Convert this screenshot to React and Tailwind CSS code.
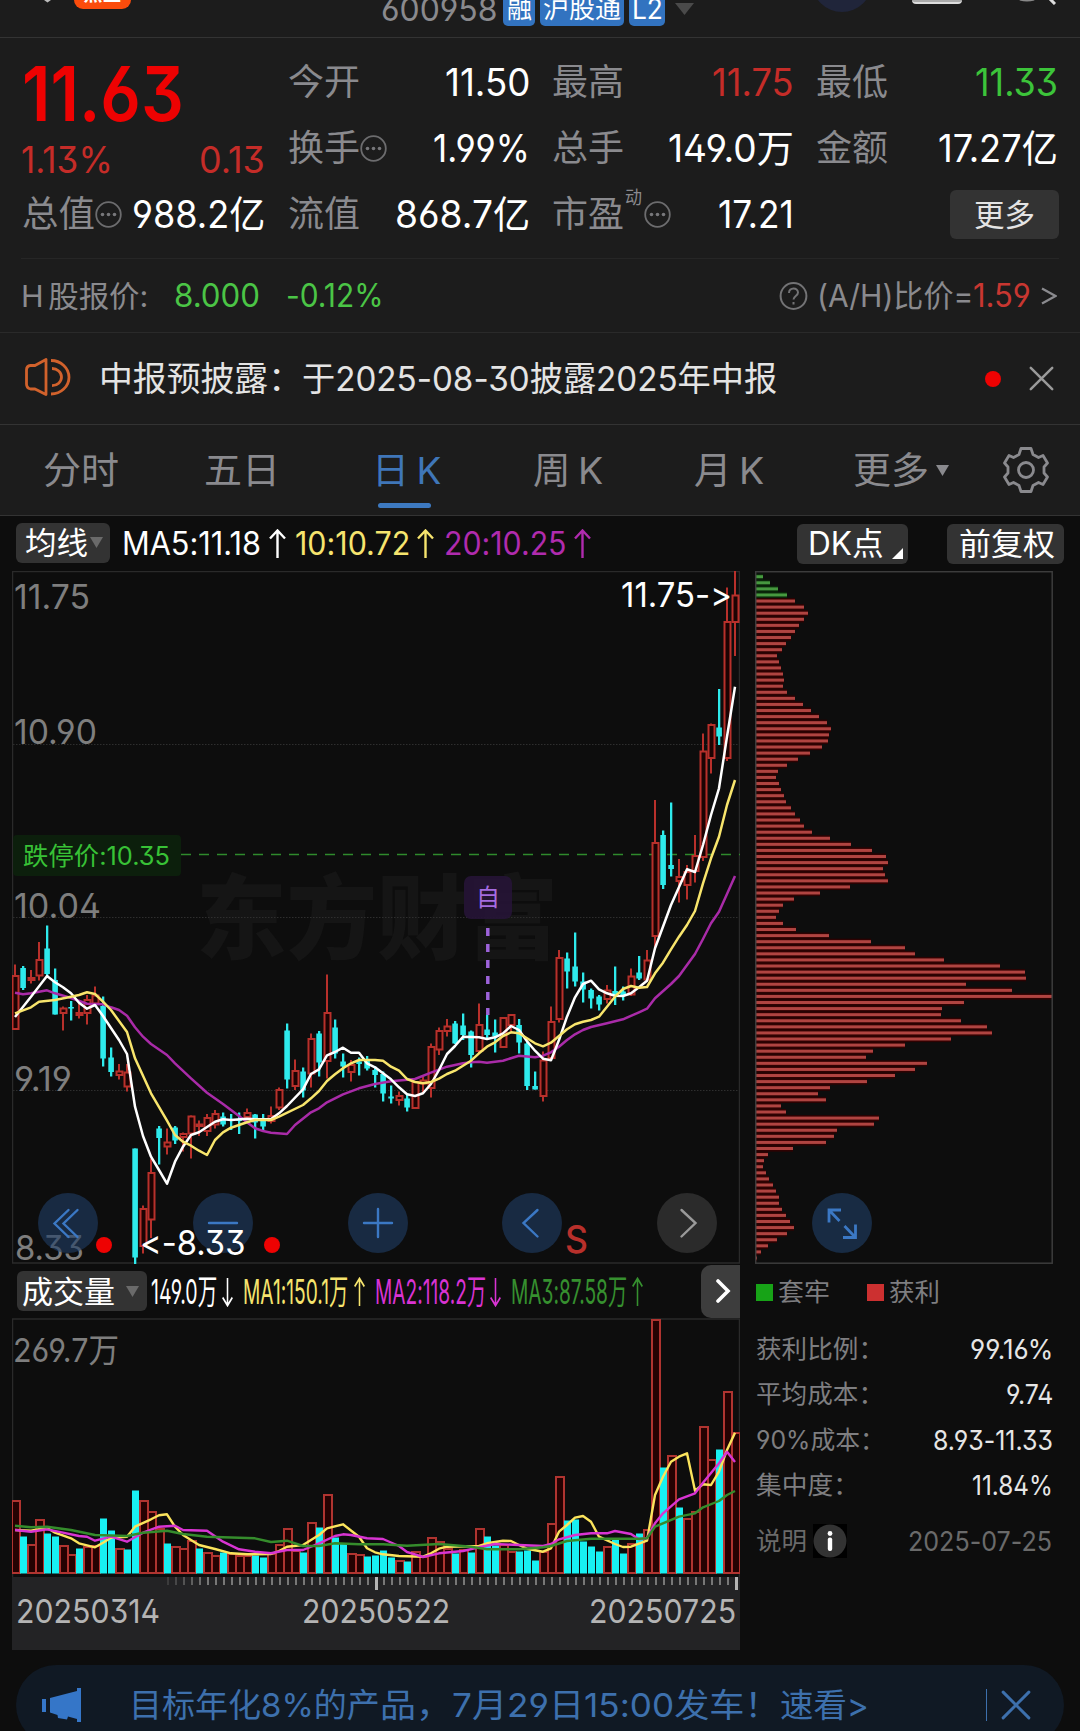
import { useLayoutEffect, useRef } from "react";

// [direction, high, body top, body bottom, low]
const candles = [
  ["u", 964.5, 975.5, 1029.5, 1029.5], ["d", 966, 968, 988, 990], ["u", 970, 977.5, 980.5, 983.5],
  ["u", 942, 959.5, 976, 980.5], ["d", 925.5, 948.5, 974, 976.5], ["d", 968.5, 980, 1014.5, 1014.5],
  ["u", 1006.5, 1008, 1013.5, 1030.5], ["d", 1001, 1007, 1008.5, 1020.5], ["u", 1003.5, 1012.5, 1015.5, 1018.5],
  ["u", 995, 999.5, 1013.5, 1024.5], ["u", 986.5, 995, 1004, 1005], ["d", 996.5, 1006, 1058.5, 1066.5],
  ["d", 1047.5, 1057.5, 1072, 1076.5], ["u", 1064, 1071, 1075.5, 1079.5], ["u", 1064, 1072, 1087, 1091.5],
  ["d", 1148.5, 1148.5, 1257.5, 1264], ["u", 1205.5, 1208.5, 1246.5, 1253.5], ["u", 1158.5, 1172.5, 1220, 1238],
  ["d", 1126, 1128.5, 1138, 1164.5], ["u", 1128.5, 1142, 1147, 1154.5], ["d", 1126, 1127.5, 1140.5, 1144],
  ["u", 1132.5, 1133.5, 1137.5, 1151.5], ["u", 1115.5, 1116, 1134, 1158.5], ["u", 1120.5, 1124, 1126.5, 1136],
  ["u", 1114, 1117.5, 1131.5, 1136], ["u", 1110, 1113.5, 1125, 1128.5], ["d", 1112.5, 1116.5, 1124.5, 1126.5],
  ["d", 1114, 1119.5, 1120.5, 1130], ["d", 1112.5, 1119.5, 1120.5, 1134], ["u", 1108.5, 1112.5, 1117.5, 1120.5],
  ["d", 1114, 1114.5, 1122.5, 1138.5], ["d", 1114, 1120.5, 1126.5, 1131.5], ["u", 1106.5, 1115.5, 1121.5, 1123.5],
  ["u", 1087.5, 1089.5, 1108, 1110], ["d", 1023.5, 1030.5, 1079.5, 1088.5], ["u", 1059.5, 1070.5, 1086.5, 1090],
  ["d", 1067.5, 1071.5, 1090.5, 1097.5], ["u", 1033.5, 1038.5, 1074, 1087.5], ["d", 1031, 1033.5, 1062.5, 1076.5],
  ["u", 974.5, 1012.5, 1061.5, 1078.5], ["d", 1019.5, 1027.5, 1053.5, 1058.5], ["d", 1053.5, 1061.5, 1066.5, 1077.5],
  ["u", 1060, 1064.5, 1072.5, 1081.5], ["d", 1057.5, 1061.5, 1064, 1075.5], ["d", 1056, 1060, 1068.5, 1070.5],
  ["d", 1066.5, 1070, 1075, 1087.5], ["d", 1071.5, 1074, 1093.5, 1101.5], ["d", 1085.5, 1096.5, 1098.5, 1103.5],
  ["u", 1091.5, 1095.5, 1100.5, 1105.5], ["d", 1093.5, 1098.5, 1107.5, 1111.5], ["u", 1081, 1081.5, 1108.5, 1108.5],
  ["u", 1076.5, 1080, 1084, 1093.5], ["u", 1043.5, 1046.5, 1088.5, 1097.5], ["u", 1027.5, 1030.5, 1050, 1055],
  ["u", 1019, 1026, 1031.5, 1036.5], ["d", 1021, 1023.5, 1043.5, 1044], ["d", 1013.5, 1025.5, 1035, 1040],
  ["d", 1030.5, 1031.5, 1055, 1067.5], ["u", 1003.5, 1024.5, 1051.5, 1053.5], ["d", 1015, 1029.5, 1035, 1038.5],
  ["d", 1019.5, 1032.5, 1036.5, 1052.5], ["u", 1017.5, 1017.5, 1047.5, 1047.5], ["u", 1014, 1014.5, 1025.5, 1031.5],
  ["d", 1019, 1025, 1042.5, 1053.5], ["d", 1041.5, 1043.5, 1086, 1090], ["d", 1071.5, 1086, 1089.5, 1089.5],
  ["u", 1051.5, 1060, 1096.5, 1101.5], ["u", 1006.5, 1021.5, 1058.5, 1060], ["u", 950, 957.5, 1019.5, 1022.5],
  ["d", 952.5, 958.5, 971.5, 988.5], ["d", 932.5, 966.5, 981.5, 986.5], ["d", 972.5, 981.5, 989.5, 1002.5],
  ["d", 988.5, 990, 998.5, 1008.5], ["d", 995, 996.5, 1004.5, 1010.5], ["u", 985, 990, 999.5, 1003.5],
  ["d", 966.5, 991, 995, 1005], ["d", 986.5, 991.5, 995, 1000.5], ["u", 968.5, 976, 995, 996],
  ["d", 956, 972.5, 978.5, 980], ["u", 950, 960, 980, 981.5], ["u", 800, 842.5, 936.5, 948.5],
  ["d", 830.5, 835, 885, 889], ["d", 802.5, 865, 869, 876.5], ["u", 859, 876.5, 881.5, 902.5],
  ["u", 865, 871.5, 885.5, 899.5], ["u", 835, 855.5, 871.5, 882.5], ["u", 733.5, 751, 857.5, 861],
  ["u", 723.5, 724.5, 758.5, 773.5], ["d", 689, 727.5, 736.5, 745], ["u", 587.5, 621.5, 758.5, 761],
  ["u", 571, 595, 622.5, 656],
];

// moving averages as [day, level], level in thirds of a pixel
const ma5 = [[0, 411], [2, 350], [4, 288], [5, 307], [6, 322], [7, 340], [8, 368], [9, 386], [10, 375], [11, 408], [13, 480], [14, 522], [15, 680], [16, 768], [17, 830], [18, 870], [19, 911], [20, 845], [21, 800], [22, 765], [23, 757], [25, 725], [26, 718], [27, 720], [29, 716], [30, 718], [32, 717], [33, 700], [34, 678], [36, 628], [37, 582], [38, 568], [39, 526], [40, 516], [41, 503], [42, 518], [43, 518], [44, 550], [45, 562], [46, 580], [47, 598], [48, 622], [49, 643], [50, 648], [51, 640], [52, 612], [53, 570], [54, 522], [55, 498], [56, 470], [58, 472], [59, 477], [60, 472], [61, 460], [62, 438], [63, 450], [64, 484], [65, 512], [66, 536], [67, 541], [68, 480], [69, 410], [70, 352], [71, 312], [72, 302], [73, 328], [74, 340], [75, 347], [76, 348], [77, 340], [78, 322], [79, 302], [80, 205], [82, 75], [84, -32], [85, -24], [86, -105], [87, -195], [88, -275], [89, -430], [90, -580]];
const ma10 = [[0, 400], [2, 382], [3, 365], [5, 360], [7, 350], [8, 345], [9, 337], [10, 342], [11, 365], [12, 390], [14, 456], [15, 535], [17, 640], [19, 722], [20, 765], [21, 785], [22, 797], [23, 812], [24, 825], [25, 780], [26, 757], [27, 743], [29, 727], [30, 720], [32, 720], [33, 710], [36, 675], [37, 655], [38, 633], [39, 603], [40, 583], [41, 565], [42, 550], [43, 540], [45, 540], [46, 542], [47, 560], [48, 572], [49, 597], [50, 606], [51, 610], [52, 606], [53, 596], [54, 582], [55, 572], [57, 542], [58, 520], [59, 500], [60, 487], [61, 468], [62, 457], [63, 460], [64, 475], [65, 490], [66, 499], [67, 488], [68, 468], [69, 448], [70, 433], [71, 425], [72, 420], [73, 410], [74, 380], [75, 350], [76, 327], [77, 318], [78, 323], [79, 321], [80, 280], [81, 248], [82, 208], [83, 170], [84, 135], [85, 93], [86, 10], [87, -65], [88, -130], [89, -225], [90, -300]];
const ma20 = [[0, 338], [1, 343], [2, 340], [4, 331], [5, 340], [7, 354], [9, 371], [11, 373], [12, 382], [13, 390], [14, 407], [15, 442], [16, 470], [17, 492], [19, 525], [20, 550], [22, 595], [24, 638], [26, 672], [28, 708], [29, 727], [30, 745], [31, 753], [32, 758], [34, 762], [35, 735], [37, 697], [38, 685], [39, 667], [41, 643], [43, 625], [45, 612], [47, 604], [50, 597], [52, 578], [54, 560], [56, 550], [57, 547], [58, 545], [59, 548], [61, 542], [63, 527], [65, 532], [66, 527], [67, 517], [68, 500], [69, 480], [70, 463], [71, 450], [72, 441], [74, 430], [76, 418], [78, 397], [79, 386], [80, 355], [82, 312], [83, 288], [84, 255], [85, 222], [86, 177], [87, 130], [88, 95], [89, 42], [90, -12]];

const volumes = [73, 37, 29, 54, 40, 37, 28, 19, 25, 27, 28, 55, 43, 25, 24, 83, 73, 62, 45, 30, 27, 25, 33, 25, 21, 18, 21, 20, 18, 18, 18, 16, 20, 29, 45, 23, 21, 51, 46, 79, 36, 30, 20, 19, 17, 18, 23, 16, 13, 12, 22, 17, 36, 32, 25, 20, 24, 21, 45, 37, 28, 29, 22, 22, 23, 13, 22, 50, 97, 53, 54, 32, 27, 22, 27, 34, 20, 30, 40, 44, 254, 106, 118, 66, 55, 62, 147, 114, 124, 182, 141];
const fallingDays = new Set([1, 4, 5, 8, 11, 12, 14, 15, 19, 23, 26, 30, 31, 36, 38, 40, 41, 44, 45, 46, 47, 49, 55, 57, 59, 60, 63, 64, 65, 69, 70, 71, 72, 73, 75, 76, 78, 81, 83, 88]);

const vol5 = [[0, 810], [2, 812], [4, 803], [5, 818], [7, 835], [8, 850], [10, 862], [11, 848], [12, 833], [14, 830], [15, 800], [17, 778], [18, 766], [19, 763], [20, 800], [21, 825], [23, 855], [25, 867], [27, 880], [29, 883], [32, 882], [33, 873], [34, 860], [36, 855], [38, 825], [39, 805], [41, 793], [43, 830], [44, 865], [45, 877], [46, 883], [48, 888], [51, 890], [52, 880], [53, 866], [54, 860], [58, 858], [59, 850], [61, 842], [62, 843], [63, 855], [64, 866], [66, 875], [67, 865], [68, 815], [69, 795], [70, 773], [71, 768], [72, 785], [73, 830], [75, 852], [76, 861], [77, 860], [79, 842], [80, 705], [81, 650], [82, 605], [83, 590], [84, 580], [85, 692], [86, 673], [87, 675], [88, 635], [89, 570], [90, 518]];
const vol10 = [[0, 810], [2, 815], [4, 808], [6, 818], [8, 828], [9, 830], [10, 842], [12, 830], [14, 845], [16, 818], [18, 800], [20, 797], [21, 810], [24, 812], [26, 845], [28, 868], [30, 875], [32, 880], [34, 870], [36, 870], [38, 850], [40, 828], [41, 823], [42, 825], [44, 835], [46, 837], [48, 858], [49, 876], [50, 883], [51, 891], [53, 880], [56, 873], [58, 862], [60, 852], [63, 855], [66, 858], [67, 852], [68, 838], [70, 825], [72, 820], [74, 820], [75, 813], [77, 822], [78, 838], [79, 835], [80, 790], [81, 760], [83, 718], [85, 700], [86, 668], [88, 610], [89, 575], [90, 606]];
const vol20 = [[0, 797], [2, 802], [4, 800], [7, 810], [10, 825], [14, 828], [16, 818], [19, 812], [21, 822], [24, 830], [30, 835], [32, 846], [34, 842], [36, 858], [38, 858], [40, 850], [43, 853], [46, 853], [49, 857], [53, 852], [57, 860], [59, 868], [63, 868], [66, 862], [67, 858], [69, 843], [72, 836], [78, 836], [79, 835], [80, 800], [83, 770], [85, 760], [86, 742], [88, 723], [89, 705], [90, 693]];

const chips = [7, 14, 22, 31, 39, 48, 52, 48, 43, 39, 35, 30, 26, 21, 23, 25, 27, 28, 27, 31, 39, 47, 55, 63, 71, 75, 73, 72, 66, 54, 42, 31, 22, 20, 23, 25, 28, 30, 35, 39, 44, 48, 56, 74, 95, 116, 130, 132, 127, 129, 132, 94, 64, 38, 27, 23, 20, 27, 40, 73, 115, 149, 159, 188, 244, 269, 270, 210, 256, 296, 208, 186, 185, 205, 231, 236, 195, 149, 117, 110, 171, 159, 139, 111, 74, 62, 70, 25, 30, 123, 118, 81, 78, 70, 37, 12, 8, 7, 10, 13, 17, 20, 23, 23, 26, 30, 34, 38, 31, 21, 12, 5, 1];

const dayX = (i) => 15 + i * 8;
const toPoints = (line, base) => line.map(([i, v]) => `${dayX(i)},${(base + v / 3).toFixed(1)}`).join(" ");

// Squeezes or stretches its text to the width of the box
function Fit({ className = "", children }) {
  const box = useRef(null);
  const text = useRef(null);

  useLayoutEffect(() => {
    const ratio = box.current.clientWidth / text.current.offsetWidth;
    text.current.style.transform = `scaleX(${ratio})`;
  }, [children]);

  return (
    <span ref={box} className={`inline-block shrink-0 leading-none ${className}`}>
      <span ref={text} className="inline-block origin-left whitespace-pre">{children}</span>
    </span>
  );
}

function SvgText({ x, y, width, size, fill, weight, children }) {
  return (
    <text x={x} y={y} fontSize={size} fill={fill} fontWeight={weight} textLength={width} lengthAdjust="spacingAndGlyphs">
      {children}
    </text>
  );
}

function Dots() {
  return (
    <svg className="h-[27px] w-[27px] shrink-0" viewBox="0 0 27 27">
      <circle cx="13.5" cy="13.5" r="12.3" fill="none" stroke="#6c6c6e" strokeWidth="1.8" />
      <circle cx="7.5" cy="13.5" r="1.8" fill="#77777a" />
      <circle cx="13.5" cy="13.5" r="1.8" fill="#77777a" />
      <circle cx="19.5" cy="13.5" r="1.8" fill="#77777a" />
    </svg>
  );
}

function Arrow({ down, className = "w-[17px]" }) {
  return (
    <svg className={`h-[30px] shrink-0 ${down ? "rotate-180" : ""} ${className}`} viewBox="0 0 17 30" fill="none" stroke="currentColor" strokeWidth="2.4" preserveAspectRatio="none">
      <path d="M8.5 29V2M1 9.5 8.5 1.5 16 9.5" />
    </svg>
  );
}

function Cross({ className }) {
  return (
    <svg className={className} viewBox="0 0 28 28" fill="none" stroke="currentColor" strokeWidth="2.8" strokeLinecap="round">
      <path d="M2 2 26 26M26 2 2 26" />
    </svg>
  );
}

function Header() {
  return (
    <header className="flex h-[38px] shrink-0 items-start overflow-hidden border-b border-[#333]">
      <svg className="ml-[42px] h-[3px] w-[11px]" viewBox="0 0 11 3"><path d="M2 0h7L5.500 2.500z" fill="#bbb" /></svg>
      <div className="ml-[21px] flex h-[9px] w-[57px] items-end justify-center overflow-hidden rounded-b-[9px] bg-[#fb4c0c]">
        <span className="mb-[5px] text-[19px] leading-none font-bold text-white">点金</span>
      </div>
      <Fit className="-mt-[7px] ml-[250px] w-[117px] text-[33px] text-[#8a8a8e]">600958</Fit>
      <div className="-mt-2 ml-[5px] flex gap-[5px] text-[26px] text-white">
        <div className="flex h-[34px] w-8 items-center justify-center rounded-[5px] bg-[#3273c0]"><Fit className="w-[25px]">融</Fit></div>
        <div className="flex h-[34px] w-[84px] items-center justify-center rounded-[5px] bg-[#3273c0]"><Fit className="w-[78px]">沪股通</Fit></div>
        <div className="flex h-[34px] w-[36px] items-center justify-center rounded-[5px] bg-[#3273c0]"><Fit className="w-[31px] text-[28px]">L2</Fit></div>
      </div>
      <svg className="mt-[3px] ml-[10px] h-3 w-[19px]" viewBox="0 0 19 12"><path d="M0 0h19L9.500 12z" fill="#4a4a4a" /></svg>
      <svg className="ml-[122px] h-3 w-[52px]" viewBox="0 0 52 12"><circle cx="26" cy="-18" r="30" fill="#20253a" /></svg>
      <div className="ml-[44px] h-1 w-[50px] rounded-b-[4px] border-b-2 border-[#ddd] bg-[#aaa]" />
      <svg className="ml-[57px] h-[5px] w-[38px]" viewBox="0 0 38 5" fill="none" strokeWidth="3"><path d="M1-1Q8 1 15-1" stroke="#888" /><path d="M30-2 36 4" stroke="#ddd" /></svg>
    </header>
  );
}

const stats = [
  [
    { label: "今开", value: <Fit className="w-[85px]">11.50</Fit> },
    { label: "换手", icon: true, value: <Fit className="w-[97px]">1.99%</Fit> },
    { label: "流值", value: <Fit className="w-[135px]">868.7亿</Fit> },
  ],
  [
    { label: "最高", value: <Fit className="w-[82px] text-[#c52c28]">11.75</Fit> },
    { label: "总手", value: <Fit className="w-[126px]">149.0万</Fit> },
    { label: "市盈", mark: "动", icon: true, value: <Fit className="w-[76px]">17.21</Fit> },
  ],
  [
    { label: "最低", value: <Fit className="w-[83px] text-[#3cc43a]">11.33</Fit> },
    { label: "金额", value: <Fit className="w-[120px]">17.27亿</Fit> },
  ],
];

function Quote() {
  return (
    <section className="h-[220px] shrink-0 px-6 pt-[11px]">
      <div className="grid grid-cols-[240px_240px_240px_240px] gap-x-6 text-[38px]">
        <div className="-ml-0.5">
          <div className="flex h-[87px] items-center">
            <Fit className="w-[162px] text-[76px] font-semibold text-[#ee0202]">11.63</Fit>
          </div>
          <div className="flex h-[47px] items-center justify-between text-[37px] text-[#c52c28]">
            <Fit className="-ml-px w-[92px]">1.13%</Fit>
            <Fit className="-mr-px w-[66px]">0.13</Fit>
          </div>
          <div className="flex h-[62px] items-center">
            <Fit className="w-[73px] text-[36px] text-[#8a8a8e]">总值</Fit>
            <Dots />
            <Fit className="-mr-px ml-auto w-[133px] text-white">988.2亿</Fit>
          </div>
        </div>
        {stats.map((column, index) => (
          <div key={index}>
            {column.map((item) => (
              <div className="flex h-[66px] items-center" key={item.label}>
                <Fit className="w-[72px] text-[36px] text-[#8a8a8e]">{item.label}</Fit>
                {item.mark && <Fit className="mt-[-32px] mr-[2px] ml-px w-[17px] text-[18px] text-[#8a8a8e]">{item.mark}</Fit>}
                {item.icon && <Dots />}
                <div className="-mr-0.5 ml-auto flex text-white">{item.value}</div>
              </div>
            ))}
            {column.length === 2 && (
              <div className="flex h-[66px] items-center justify-end">
                <button className="-mr-[3px] flex h-[49px] w-[109px] items-center justify-center rounded-[6px] bg-[#333]">
                  <Fit className="w-[61px] text-[31px] text-[#e4e4e4]">更多</Fit>
                </button>
              </div>
            )}
          </div>
        ))}
      </div>
    </section>
  );
}

function HShare() {
  return (
    <section className="shrink-0 border-b border-[#2a2a2a]">
      <div className="mx-[21px] flex h-[74px] items-center border-t border-[#262626] text-[32px] text-[#8a8a8e]">
        <Fit className="w-[127px] text-[30px] [word-spacing:-4px]">H 股报价:</Fit>
        <Fit className="ml-[26px] w-[86px] text-[#4bc546]">8.000</Fit>
        <Fit className="ml-[26px] w-[98px] text-[#4bc546]">-0.12%</Fit>
        <svg className="ml-auto h-7 w-[29px]" viewBox="0 0 29 28" fill="none" stroke="#737375" strokeWidth="2">
          <circle cx="14.500" cy="14" r="12.900" />
          <path d="M10 11c0-6 9-6 9-.5 0 3.500-4.500 3.500-4.500 7M14.500 20v2.500" />
        </svg>
        <Fit className="ml-[9px] w-[156px] text-[31px]">(A/H)比价=</Fit>
        <Fit className="w-[58px] text-[#c83731]">1.59</Fit>
        <svg className="mr-0.5 ml-[10px] h-[18px] w-4" viewBox="0 0 16 18" fill="none" stroke="currentColor" strokeWidth="2.300"><path d="M1 1.500 14.500 9 1 16.500" /></svg>
      </div>
    </section>
  );
}

function Notice() {
  return (
    <section className="flex h-[92px] shrink-0 items-center border-b border-[#333] pl-[25px] text-[34px] text-[#e4e4e4]">
      <svg className="-mt-[3px] h-[38px] w-[46px]" viewBox="0 0 46 38" fill="none" stroke="#d2622c" strokeWidth="2.800" strokeLinejoin="round">
        <path d="M10 7.500 21 1.500V36.500L10 31H5.500Q1.500 30 1.500 26V12Q1.500 8 5.500 7.500Z" />
        <path d="M26 2.500A18 16.750 0 0 1 26 36" />
        <path d="M27 10.500A9.500 8.600 0 0 1 27 27.700" />
      </svg>
      <Fit className="ml-[28px] w-[203px]">中报预披露：</Fit>
      <Fit className="w-[475px]">于2025-08-30披露2025年中报</Fit>
      <span className="ml-[208px] size-4 rounded-full bg-[#ee0202]" />
      <Cross className="ml-[28px] size-[25px] text-[#9a9a9a]" />
    </section>
  );
}

function Tabs() {
  return (
    <nav className="flex h-[91px] shrink-0 items-center border-b border-[#333] text-[37px] text-[#8a8a8e]">
      <div className="flex w-[161px] justify-center"><Fit className="w-[76px]">分时</Fit></div>
      <div className="flex w-[161px] justify-center"><Fit className="w-[76px]">五日</Fit></div>
      <div className="relative flex h-full w-[161px] items-center justify-center pl-2 text-[#3f76b8]">
        <Fit className="w-[69px] [word-spacing:-3px]">日 K</Fit>
        <span className="absolute bottom-[7px] left-[56px] h-[5px] w-[53px] rounded-full bg-[#3d79c0]" />
      </div>
      <div className="flex w-[161px] justify-center pl-2"><Fit className="w-[70px] [word-spacing:-3px]">周 K</Fit></div>
      <div className="flex w-[161px] justify-center pl-2"><Fit className="w-[70px] [word-spacing:-3px]">月 K</Fit></div>
      <div className="ml-[48px] flex items-center">
        <Fit className="w-[76px]">更多</Fit>
        <svg className="ml-[7px] h-[11px] w-[13px]" viewBox="0 0 13 11"><path d="M0 0h13L6.500 11z" fill="#8a8a8e" /></svg>
      </div>
      <svg className="ml-[54px] size-[46px]" viewBox="0 0 46 46" fill="none" stroke="#8a8a8e" strokeWidth="2.800" strokeLinejoin="round">
        <path d="M18 1.500H28L30 7.500 35.500 10.500 40 8.500 44.500 16 41 20V26L44.500 30 40 37.500 35.500 35.500 30 38.500 28 44.500H18L16 38.500 10.500 35.500 6 37.500 1.500 30 5 26V20L1.500 16 6 8.500 10.500 10.500 16 7.500Z" />
        <circle cx="23" cy="23" r="7.500" />
      </svg>
    </nav>
  );
}

function AverageBar() {
  return (
    <div className="flex h-[55px] shrink-0 items-center pl-4 text-[32px]">
      <button className="-mt-0.5 flex h-10 w-[94px] items-center rounded-[6px] bg-[#333] pl-2 text-white">
        <Fit className="w-[63px] text-[31px]">均线</Fit>
        <svg className="ml-[3px] h-[11px] w-[13px]" viewBox="0 0 13 11"><path d="M0 0h13L6.500 11z" fill="#6a6a6a" /></svg>
      </button>
      <div className="mt-px ml-[12px] flex items-center text-white"><Fit className="w-[139px]">MA5:11.18</Fit><Arrow className="ml-[8px] w-[17px]" /></div>
      <div className="mt-px ml-[9px] flex items-center text-[#f6e46e]"><Fit className="w-[115px]">10:10.72</Fit><Arrow className="ml-[7px] w-[17px]" /></div>
      <div className="mt-px ml-[10px] flex items-center text-[#b02bae]"><Fit className="w-[123px]">20:10.25</Fit><Arrow className="ml-[7px] w-[17px]" /></div>
      <button className="relative ml-[206px] flex h-10 w-[111px] items-center rounded-[6px] bg-[#333] pl-[11px] text-white">
        <Fit className="w-[76px]">DK点</Fit>
        <svg className="absolute right-[5px] bottom-[5px] h-[11px] w-[11px]" viewBox="0 0 11 11"><path d="M11 0V11H0z" fill="#fff" /></svg>
      </button>
      <button className="ml-[39px] flex h-10 w-[117px] items-center justify-center rounded-[6px] bg-[#333] text-white">
        <Fit className="w-[96px] text-[31px]">前复权</Fit>
      </button>
    </div>
  );
}

const controls = [
  { place: "left-[26px] bg-[#1f3e66]/60 text-[#3b78c4]", d: "M30.500 17 16.500 30.500 30.500 44M39.500 17 25.500 30.500 39.500 44" },
  { place: "left-[181px] bg-[#1f3e66]/60 text-[#3b78c4]", d: "M16 30H44" },
  { place: "left-[336px] bg-[#1f3e66]/60 text-[#3b78c4]", d: "M16 30H44M30 16V44" },
  { place: "left-[490px] bg-[#1f3e66]/60 text-[#3b78c4]", d: "M35.500 17 21.500 30 35.500 43.500" },
  { place: "left-[645px] bg-[#2b2b2b] text-[#9a9a9a]", d: "M24.500 17 38.500 30 24.500 43.500" },
];

function PriceChart() {
  return (
    <div className="relative h-[693px] w-[728px]">
      <svg className="block h-full w-full" viewBox="12 571 728 693">
        <SvgText x="196" y="952" width="362" size="92" weight="900" fill="#151515">东方财富</SvgText>
        <g stroke="#2e2e2e" strokeDasharray="1.500 1.500">
          <path d="M13 744.500H739M13 917.500H739M13 1090.500H739" />
        </g>
        <rect x="12.500" y="571.500" width="727" height="691.500" fill="none" stroke="#2a2a2a" strokeWidth="1.500" />
        <path d="M181 854.500H740" stroke="#2f8a2c" strokeWidth="1.500" strokeDasharray="10 8" />

        {candles.map(([dir, high, top, bottom, low], i) => {
          const x = dayX(i);
          return dir === "u" ? (
            <g key={i} stroke="#b8302b" strokeWidth="2" fill="#1c0303">
              <path d={`M${x} ${high}V${top}M${x} ${bottom}V${low}`} />
              <rect x={x - 2.500} y={top + 0.500} width="6" height={Math.max(bottom - top - 1, 1.500)} />
            </g>
          ) : (
            <g key={i} fill="#2eeaec">
              <rect x={x - 1} y={high} width="2.300" height={low - high} />
              <rect x={x - 2.700} y={top} width="5.600" height={Math.max(bottom - top, 1.500)} />
            </g>
          );
        })}
        <g fill="none" strokeWidth="2.500" strokeLinejoin="round">
          <polyline points={toPoints(ma20, 880)} stroke="#a92ba8" />
          <polyline points={toPoints(ma5, 880)} stroke="#fff" />
          <polyline points={toPoints(ma10, 880)} stroke="#f8e56c" />
        </g>

        <path d="M487.800 928V1015" stroke="#9d63da" strokeWidth="3.500" strokeDasharray="8 8" />
        <rect x="464" y="876" width="48" height="43" rx="7" fill="#261436" fillOpacity=".9" />
        <SvgText x="476" y="906" width="24" size="24" fill="#a56be0">自</SvgText>

        <rect x="13" y="835" width="168" height="41" rx="4" fill="#0c1f0c" />
        <SvgText x="23" y="865" width="147" size="25" fill="#38c236">跌停价:10.35</SvgText>

        <SvgText x="14" y="609" width="76" size="34" fill="#7e7e7e">11.75</SvgText>
        <SvgText x="14" y="744" width="83" size="34" fill="#7e7e7e">10.90</SvgText>
        <SvgText x="14" y="918" width="87" size="34" fill="#7e7e7e">10.04</SvgText>
        <SvgText x="14" y="1091" width="58" size="34" fill="#7e7e7e">9.19</SvgText>
        <SvgText x="15" y="1260" width="69" size="34" fill="#7e7e7e">8.33</SvgText>
        <SvgText x="621" y="607" width="111" size="34" fill="#fff">{"11.75->"}</SvgText>
        <SvgText x="565" y="1253" width="23" size="38" weight="500" fill="#b8302b">S</SvgText>
      </svg>

      {controls.map((control) => (
        <button className={`absolute top-[622px] size-[60px] rounded-full ${control.place}`} key={control.d}>
          <svg className="size-[60px]" viewBox="0 0 60 60" fill="none" stroke="currentColor" strokeWidth="2.400" strokeLinecap="round">
            <path d={control.d} />
          </svg>
        </button>
      ))}
      <span className="absolute top-[666px] left-[84px] size-4 rounded-full bg-[#ee0202]" />
      <span className="absolute top-[666px] left-[252px] size-4 rounded-full bg-[#ee0202]" />
      <Fit className="absolute top-[655px] left-[128px] w-[105px] text-[34px] text-white">{"<-8.33"}</Fit>
    </div>
  );
}

function VolumeBar() {
  return (
    <div className="flex h-[54px] w-[728px] items-center pl-[5px] text-[34px]">
      <button className="flex h-10 w-[130px] shrink-0 items-center rounded-[6px] bg-[#333] pl-[5px] text-white">
        <Fit className="w-[93px] text-[31px]">成交量</Fit>
        <svg className="ml-[11px] h-[11px] w-[13px]" viewBox="0 0 13 11"><path d="M0 0h13L6.500 11z" fill="#6a6a6a" /></svg>
      </button>
      <div className="mt-0.5 ml-[4px] flex items-center text-white"><Fit className="w-[66px]">149.0万</Fit><Arrow down className="ml-[5px] w-[11px]" /></div>
      <div className="mt-0.5 ml-[10px] flex items-center text-[#f6e46e]"><Fit className="w-[105px]">MA1:150.1万</Fit><Arrow className="ml-[6px] w-[11px]" /></div>
      <div className="mt-0.5 ml-[10px] flex items-center text-[#d933d3]"><Fit className="w-[111px]">MA2:118.2万</Fit><Arrow down className="ml-[4px] w-[11px]" /></div>
      <div className="mt-0.5 ml-[10px] flex items-center text-[#36902f]"><Fit className="w-[116px]">MA3:87.58万</Fit><Arrow className="ml-[5px] w-[11px]" /></div>
      <button className="ml-auto flex h-[53px] w-[39px] shrink-0 items-center justify-center rounded-l-[10px] bg-[#3d3d3d]">
        <svg className="ml-1 h-6 w-4" viewBox="0 0 16 24" fill="none" stroke="#fff" strokeWidth="3.600" strokeLinecap="round"><path d="M3 2 13 12 3 22" /></svg>
      </button>
    </div>
  );
}

function VolumeChart() {
  return (
    <svg className="block h-[259px] w-[728px]" viewBox="12 1318 728 259">
      <path d="M12.500 1577V1319H739.500V1577" fill="none" stroke="#2a2a2a" strokeWidth="1.500" />
      {volumes.map((height, i) =>
        fallingDays.has(i) ? (
          <rect key={i} x={dayX(i) - 3} y={1573.500 - height} width="7" height={height} fill="#18f0f2" />
        ) : (
          <rect key={i} x={dayX(i) - 3} y={1574 - height} width="8" height={height - 1} fill="#250202" stroke="#b03430" strokeWidth="2" />
        )
      )}
      <g fill="none" strokeWidth="2.400" strokeLinejoin="round">
        <polyline points={toPoints(vol5, 1260)} stroke="#fbe45c" />
        <polyline points={toPoints(vol10, 1260)} stroke="#d834d2" />
        <polyline points={toPoints(vol20, 1260)} stroke="#358c2c" />
      </g>
      <SvgText x="13" y="1362" width="106" size="33" fill="#7e7e7e">269.7万</SvgText>
    </svg>
  );
}

function DateAxis() {
  const ticks = Array.from({ length: 72 }, (_, i) => 168 + i * 8);
  return (
    <div className="h-[73px] w-[728px] bg-[#232325]">
      <svg className="block h-[14px] w-full" viewBox="12 1577 728 14">
        {ticks.map((x, i) => {
          const major = x === 376 || x === 736;
          return <rect key={x} x={x - 1} y="1577" width={major ? 3 : 2} height={major ? 13 : 8} fill={major ? "#b4b4b4" : "#777"} opacity={Math.min(1, (i + 2) / 7)} />;
        })}
      </svg>
      <div className="mt-[4px] flex pl-[4px] text-[33px] text-[#b4b4b4]">
        <Fit className="w-[144px]">20250314</Fit>
        <Fit className="ml-[142px] w-[148px]">20250522</Fit>
        <Fit className="ml-[139px] w-[147px]">20250725</Fit>
      </div>
    </div>
  );
}

function ChipChart() {
  return (
    <div className="relative h-[693px] w-[298px]">
      <svg className="block h-full w-full" viewBox="755 571 298 693">
        {chips.map((width, i) => {
          const y = 576.700 + i * 6.083;
          return (
            <g key={i}>
              <rect x="756" y={y - 3} width={width} height="6.100" fill={i < 4 ? "#0a260a" : "#2e0202"} />
              <rect x="756" y={y - 1.500} width={width} height="3" fill={i < 4 ? "#46993f" : "#b04441"} />
            </g>
          );
        })}
        <rect x="755.700" y="571.700" width="296.500" height="691.500" fill="none" stroke="#3c3c3c" strokeWidth="1.500" />
      </svg>
      <button className="absolute top-[622px] left-[57px] size-[60px] rounded-full bg-[#182b43] text-[#3b78c4]">
        <svg className="size-[60px]" viewBox="0 0 60 60" fill="none" stroke="currentColor" strokeWidth="2.800">
          <path d="M29 17H17V29.500M17 17 27.500 28M31 44.500H43.500V31.500M43.500 44.500 32.500 33" />
        </svg>
      </button>
    </div>
  );
}

function ChipPanel() {
  return (
    <aside className="ml-[15px] flex w-[298px] flex-col text-[#7e7e80]">
      <ChipChart />
      <div className="flex h-[57px] items-center pl-px text-[25px]">
        <span className="size-[17px] bg-[#17a317]" />
        <Fit className="ml-[5px] w-[52px]">套牢</Fit>
        <span className="ml-[37px] size-[17px] bg-[#cc3030]" />
        <Fit className="ml-[5px] w-[51px]">获利</Fit>
      </div>
      <div className="mt-[6px] pl-px text-[25px]">
        <div className="flex h-[45px] items-center justify-between">
          <Fit className="w-[128px]">获利比例：</Fit>
          <Fit className="w-[83px] text-[27px] text-[#e6e6e6]">99.16%</Fit>
        </div>
        <div className="flex h-[45px] items-center justify-between">
          <Fit className="w-[128px]">平均成本：</Fit>
          <Fit className="w-[47px] text-[27px] text-[#e6e6e6]">9.74</Fit>
        </div>
        <div className="flex h-[46px] items-center justify-between">
          <Fit className="w-[129px]">90%成本：</Fit>
          <Fit className="w-[120px] text-[27px] text-[#e6e6e6]">8.93-11.33</Fit>
        </div>
        <div className="flex h-[45px] items-center justify-between">
          <Fit className="w-[103px]">集中度：</Fit>
          <Fit className="w-[81px] text-[27px] text-[#e6e6e6]">11.84%</Fit>
        </div>
      </div>
      <div className="mt-[16px] flex h-[34px] items-center pl-px text-[25px] text-[#6a6a6a]">
        <Fit className="w-[51px]">说明</Fit>
        <span className="ml-[6px] size-[34px] bg-black">
          <svg className="size-[34px]" viewBox="0 0 34 34">
            <circle cx="17" cy="17" r="16.500" fill="#333" />
            <circle cx="17" cy="9.500" r="2.400" fill="#fff" />
            <rect x="14.800" y="13.500" width="4.400" height="13.500" rx="2" fill="#fff" />
          </svg>
        </span>
        <Fit className="mr-px ml-auto w-[144px] text-[27px]">2025-07-25</Fit>
      </div>
    </aside>
  );
}

function Banner() {
  return (
    <div className="mx-4 mt-[15px] flex h-20 shrink-0 items-center rounded-full bg-[#101924] text-[33px] text-[#3d70ad]">
      <svg className="ml-[26px] h-[34px] w-10" viewBox="0 0 40 34" fill="#3576c8">
        <path d="M0 11h4v13H0zM8 10 35 3V0h4V34H35V31L26 28.500 25 31.500 16 30 15.500 27 8 24.500z" />
      </svg>
      <Fit className="ml-[47px] w-[251px]">目标年化8%的产</Fit>
      <Fit className="w-[72px]">品，</Fit>
      <Fit className="w-[328px]">7月29日15:00发车！</Fit>
      <Fit className="w-[89px]">{"速看>"}</Fit>
      <span className="ml-[117px] h-8 w-px bg-[#3d70ad]" />
      <Cross className="ml-[14px] size-[30px]" />
    </div>
  );
}

export default function App() {
  return (
    <main className='flex h-[1731px] w-[1080px] flex-col overflow-hidden bg-[#0d0d0d] font-["Inter","Noto_Sans_CJK_SC",sans-serif] [font-feature-settings:"ss01","cv09","calt"_0]'>
      <div className="flex shrink-0 flex-col bg-[#1c1c1c]">
        <Header />
        <Quote />
        <HShare />
        <Notice />
        <Tabs />
      </div>
      <AverageBar />
      <div className="flex shrink-0 pl-3">
        <div className="w-[728px]">
          <PriceChart />
          <VolumeBar />
          <VolumeChart />
          <DateAxis />
        </div>
        <ChipPanel />
      </div>
      <Banner />
    </main>
  );
}
